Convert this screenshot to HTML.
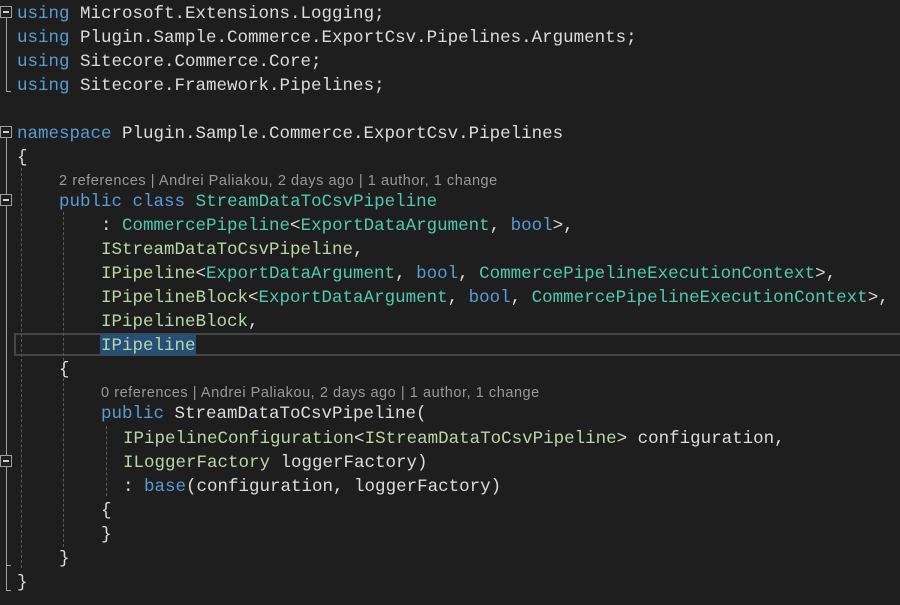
<!DOCTYPE html>
<html><head><meta charset="utf-8"><style>
html,body{margin:0;padding:0;background:#1e1e1e;width:900px;height:605px;overflow:hidden;position:relative}
.l{position:absolute;height:24px;line-height:24px;font-family:"Liberation Mono",monospace;font-size:17.5px;color:#dcdcdc;white-space:pre;margin-top:2px}
.k{color:#569cd6}.t{color:#4ec9b0}.i{color:#b8d7a3}
.cl{position:absolute;height:20px;line-height:20px;font-family:"Liberation Sans",sans-serif;font-size:14.5px;letter-spacing:0.55px;color:#999;white-space:pre;margin-top:2px}
.g{position:absolute;width:0;border-left:1px dashed #5a5a5a}
.f{position:absolute;left:0px;width:12px;height:12px;border:1px solid #a0a0a0;box-sizing:border-box;background:#1e1e1e}
.f:after{content:"";position:absolute;left:2px;top:4px;width:6px;height:2px;background:#d0d0d0}
.v{position:absolute;left:6px;width:1px;background:#a0a0a0}
.h{position:absolute;left:6px;height:1px;width:5px;background:#a0a0a0}
</style></head><body>
<div style="position:absolute;left:14px;top:333px;width:890px;height:23px;border:2px solid #464646;box-sizing:border-box"></div>
<div style="position:absolute;left:100px;top:334px;width:96px;height:21px;background:#264f78"></div>

<div class="v" style="top:17px;height:74px"></div><div class="h" style="top:91px"></div><div class="f" style="top:6px"></div>
<div class="v" style="top:137px;height:453px"></div><div class="h" style="top:590px"></div><div class="f" style="top:126px"></div>
<div class="v" style="top:205px;height:360px"></div><div class="h" style="top:565px"></div><div class="f" style="top:194px"></div>
<div class="f" style="top:455px"></div>

<div class="g" style="left:21px;top:168px;height:400px"></div>
<div class="g" style="left:63px;top:212px;height:335px"></div>
<div class="g" style="left:106px;top:426px;height:70px"></div>

<div class="l" style="left:17px;top:0"><span class="k">using</span> Microsoft.Extensions.Logging;</div>
<div class="l" style="left:17px;top:24px"><span class="k">using</span> Plugin.Sample.Commerce.ExportCsv.Pipelines.Arguments;</div>
<div class="l" style="left:17px;top:48px"><span class="k">using</span> Sitecore.Commerce.Core;</div>
<div class="l" style="left:17px;top:72px"><span class="k">using</span> Sitecore.Framework.Pipelines;</div>
<div class="l" style="left:17px;top:120px"><span class="k">namespace</span> Plugin.Sample.Commerce.ExportCsv.Pipelines</div>
<div class="l" style="left:17px;top:144px">{</div>
<div class="cl" style="left:59px;top:169px">2 references | Andrei Paliakou, 2 days ago | 1 author, 1 change</div>
<div class="l" style="left:59px;top:188px"><span class="k">public</span> <span class="k">class</span> <span class="t">StreamDataToCsvPipeline</span></div>
<div class="l" style="left:101px;top:212px">: <span class="t">CommercePipeline</span>&lt;<span class="t">ExportDataArgument</span>, <span class="k">bool</span>&gt;,</div>
<div class="l" style="left:101px;top:236px"><span class="i">IStreamDataToCsvPipeline</span>,</div>
<div class="l" style="left:101px;top:260px"><span class="i">IPipeline</span>&lt;<span class="t">ExportDataArgument</span>, <span class="k">bool</span>, <span class="t">CommercePipelineExecutionContext</span>&gt;,</div>
<div class="l" style="left:101px;top:284px"><span class="i">IPipelineBlock</span>&lt;<span class="t">ExportDataArgument</span>, <span class="k">bool</span>, <span class="t">CommercePipelineExecutionContext</span>&gt;,</div>
<div class="l" style="left:101px;top:308px"><span class="i">IPipelineBlock</span>,</div>
<div class="l" style="left:101px;top:332px"><span class="i">IPipeline</span></div>
<div class="l" style="left:59px;top:356px">{</div>
<div class="cl" style="left:101px;top:381px">0 references | Andrei Paliakou, 2 days ago | 1 author, 1 change</div>
<div class="l" style="left:101px;top:400px"><span class="k">public</span> StreamDataToCsvPipeline(</div>
<div class="l" style="left:123px;top:425px"><span class="i">IPipelineConfiguration</span>&lt;<span class="i">IStreamDataToCsvPipeline</span>&gt; configuration,</div>
<div class="l" style="left:123px;top:449px"><span class="i">ILoggerFactory</span> loggerFactory)</div>
<div class="l" style="left:123px;top:473px">: <span class="k">base</span>(configuration, loggerFactory)</div>
<div class="l" style="left:101px;top:497px">{</div>
<div class="l" style="left:101px;top:521px">}</div>
<div class="l" style="left:59px;top:545px">}</div>
<div class="l" style="left:17px;top:569px">}</div>
</body></html>
